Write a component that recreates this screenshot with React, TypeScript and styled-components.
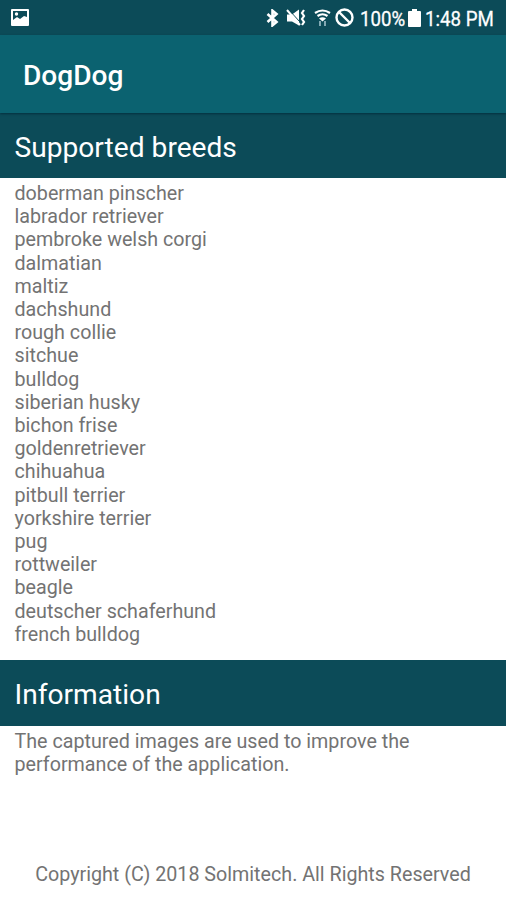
import React from "react";
import styled, { createGlobalStyle } from "styled-components";

const Global = createGlobalStyle`
  *{box-sizing:border-box}
  body{margin:0;background:#fff;font-family:Roboto,sans-serif}
`;
const Screen = styled.div`
  width:506px;height:900px;display:flex;flex-direction:column;background:#fff;overflow:hidden;
`;
const StatusBar = styled.div`
  height:35px;background:#0c4b58;display:flex;align-items:center;color:#fff;padding:0 12px 0 11px;flex:none;
`;
const Spacer = styled.div`flex:1;`;
const Icon = styled.svg<{ $ml?: number }>`
  display:block;flex:none;margin-left:${p => p.$ml ?? 0}px;
`;
const StatusText = styled.span<{ $w: number; $ml: number }>`
  font-size:21px;line-height:35px;white-space:nowrap;width:${p => p.$w}px;margin-left:${p => p.$ml}px;
  padding-top:3px;transform:scaleX(.89);transform-origin:left;-webkit-text-stroke:.3px #fff;
`;
const AppBar = styled.header`
  height:78px;flex:none;background:#0b6270;display:flex;align-items:center;padding:3px 23px 0;
  box-shadow:0 1px 2px #04303e;z-index:1;
`;
const Title = styled.h1`margin:0;color:#fff;font-size:28.1px;font-weight:500;line-height:32px;`;
const SectionHeader = styled.h2<{ $h: number }>`
  margin:0;height:${p => p.$h}px;flex:none;background:#0c4b58;color:#fff;font-size:28.15px;font-weight:400;
  padding:3px 14.5px 0;display:flex;align-items:center;
`;
const Body = styled.div<{ $h: number }>`
  height:${p => p.$h}px;flex:none;padding:4px 14.5px 0;color:#737373;font-size:19.7px;line-height:23.2px;
`;
const Line = styled.div`white-space:nowrap;`;
const Footer = styled.footer`color:#737373;font-size:19.7px;line-height:24px;text-align:center;margin-top:67px;`;

const breeds = [
  "doberman pinscher", "labrador retriever", "pembroke welsh corgi", "dalmatian", "maltiz",
  "dachshund", "rough collie", "sitchue", "bulldog", "siberian husky", "bichon frise",
  "goldenretriever", "chihuahua", "pitbull terrier", "yorkshire terrier", "pug", "rottweiler",
  "beagle", "deutscher schaferhund", "french bulldog",
];

const PictureIcon = () => (
  <Icon width="18" height="17" viewBox="0 0 18 17">
    <path fill="#fff" fillRule="evenodd" d="M1 0h16q1 0 1 1v15q0 1-1 1H1q-1 0-1-1V1q0-1 1-1zM2 2v9l4-3 3 2 4-3 3 1V2z" />
    <circle cx="5.5" cy="5" r="1.7" fill="#fff" />
  </Icon>
);
const BluetoothIcon = () => (
  <Icon width="13" height="18" viewBox="0 0 13 18">
    <path fill="none" stroke="#fff" strokeWidth="2.6" d="M1.5 5l9 8L6.5 16.3V1.7L10.5 5l-9 8" />
  </Icon>
);
const VibrateIcon = () => (
  <Icon $ml={7} width="20" height="18" viewBox="0 0 20 18">
    <path fill="#fff" d="M1 5.5h5l7-5v16l-7-4H1z" />
    <path stroke="#0c4b58" strokeWidth="1" d="M3 1l11 12" />
    <path stroke="#fff" strokeWidth="2" d="M1 1l13 15" />
    <path fill="none" stroke="#fff" strokeWidth="2.2" d="M18 1l-2 3 2 3-2 3 2 3-2 3" />
  </Icon>
);
const WifiIcon = () => (
  <Icon $ml={8} width="17" height="18" viewBox="0 0 17 18">
    <path fill="none" stroke="#fff" strokeWidth="2.2" d="M1 4q7.500-5 15 0M3.500 7q5-3.500 10 0" />
    <path fill="#fff" d="M5 9.500q3.500-2.500 7 0l-3.500 3z" />
    <path fill="none" stroke="#8fb3bd" strokeWidth="1.800" d="M6 12v5M11 12v5" />
  </Icon>
);
const BlockIcon = () => (
  <Icon $ml={4} width="19" height="19" viewBox="0 0 19 19">
    <circle cx="9.500" cy="9.500" r="8" fill="none" stroke="#fff" strokeWidth="2.400" />
    <path stroke="#fff" strokeWidth="2.400" d="M4 4l11 11" />
  </Icon>
);
const BatteryIcon = () => (
  <Icon $ml={3} width="13" height="18" viewBox="0 0 13 18">
    <path fill="#fff" d="M4 0h5v2h3q1 0 1 1v14q0 1-1 1H1q-1 0-1-1V3q0-1 1-1h3z" />
  </Icon>
);

export default function App() {
  return (
    <Screen>
      <Global />
      <StatusBar>
        <PictureIcon />
        <Spacer />
        <BluetoothIcon />
        <VibrateIcon />
        <WifiIcon />
        <BlockIcon />
        <StatusText $w={45} $ml={6}>100%</StatusText>
        <BatteryIcon />
        <StatusText $w={69} $ml={4}>1:48 PM</StatusText>
      </StatusBar>
      <AppBar><Title>DogDog</Title></AppBar>
      <SectionHeader $h={65}>Supported breeds</SectionHeader>
      <Body $h={482}>{breeds.map(b => <Line key={b}>{b}</Line>)}</Body>
      <SectionHeader $h={66}>Information</SectionHeader>
      <Body $h={70}>
        <Line>The captured images are used to improve the</Line>
        <Line>performance of the application.</Line>
      </Body>
      <Footer>Copyright (C) 2018 Solmitech. All Rights Reserved</Footer>
    </Screen>
  );
}
